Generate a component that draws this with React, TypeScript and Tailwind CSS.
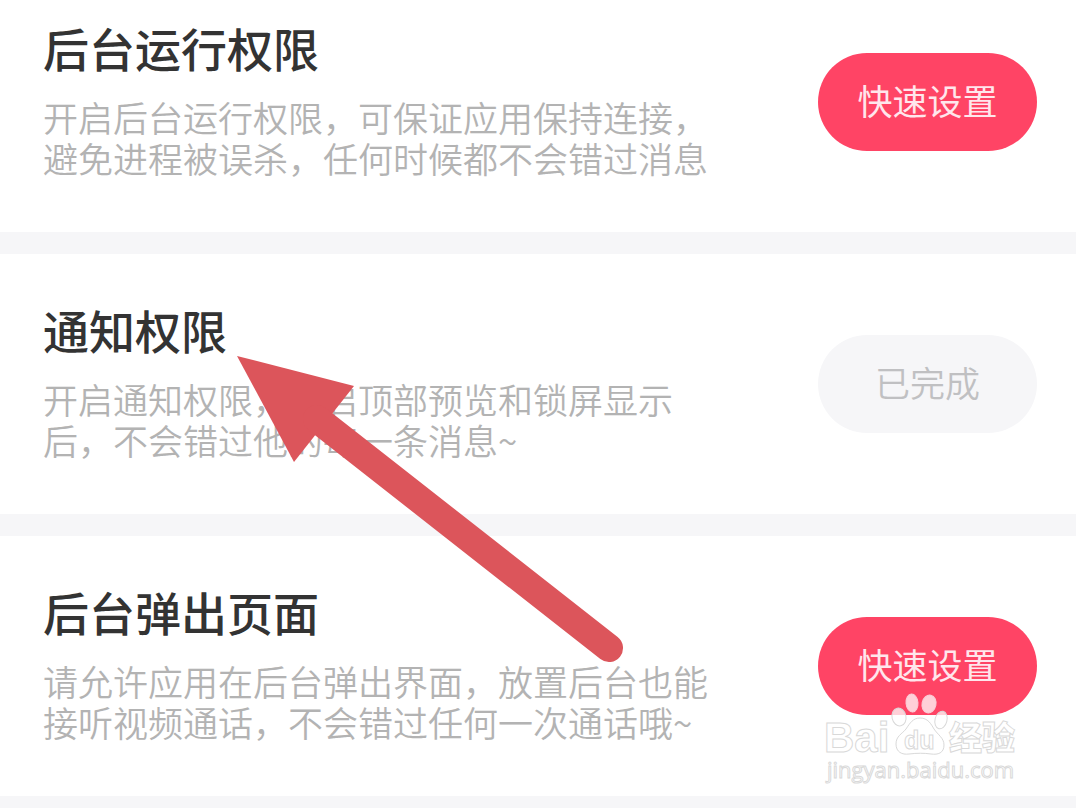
import clsx from 'clsx';

const PERMISSIONS = [
  {
    title: '后台运行权限',
    lines: ['开启后台运行权限，可保证应用保持连接，', '避免进程被误杀，任何时候都不会错过消息'],
    done: false,
  },
  {
    title: '通知权限',
    lines: ['开启通知权限，开启顶部预览和锁屏显示', '后，不会错过他的每一条消息~'],
    done: true,
  },
  {
    title: '后台弹出页面',
    lines: ['请允许应用在后台弹出界面，放置后台也能', '接听视频通话，不会错过任何一次通话哦~'],
    done: false,
  },
];

function Arrow() {
  return (
    <svg
      className="pointer-events-none absolute top-[356px] left-[237px]"
      width="390"
      height="308"
      viewBox="0 0 390 308"
      aria-hidden="true"
    >
      <path d="M0 0 L117 30 L57 106 Z" fill="#dc555b" />
      <path d="M80 63 L372 292" stroke="#dc555b" strokeWidth="28" strokeLinecap="round" />
    </svg>
  );
}

function Watermark() {
  return (
    <svg
      className="pointer-events-none absolute right-14 bottom-0"
      width="200"
      height="106"
      viewBox="0 0 200 106"
      fill="#fff"
      fillOpacity="0.75"
      stroke="#d9d9d9"
      strokeWidth="1"
      aria-hidden="true"
    >
      <ellipse cx="92" cy="13" rx="6" ry="9" stroke="#f9cdd6" transform="rotate(-5 92 13)" />
      <ellipse cx="109" cy="14" rx="7" ry="9" stroke="#f9cdd6" transform="rotate(12 109 14)" />
      <ellipse cx="79" cy="27" rx="7" ry="9" transform="rotate(-12 79 27)" />
      <ellipse cx="121" cy="30" rx="6" ry="9" transform="rotate(14 121 30)" />
      <path d="M100 28c8 0 11 6 14 11 4 6 10 9 10 16 0 8-6 10-13 9-7-1-14-1-22 0-7 1-13-2-13-10 0-8 6-10 10-15 4-6 7-11 14-11Z" />
      <g fontFamily='"Liberation Sans", Arial, sans-serif' fontWeight="700">
        <text x="4" y="62" fontSize="42">Bai</text>
        <text x="84" y="59" fontSize="25">du</text>
      </g>
      <text x="129" y="60" fontSize="33" fontWeight="900" fontFamily='"Noto Sans CJK SC", sans-serif'>
        经验
      </text>
      <text x="7" y="88" fontSize="22" fontFamily='"Open Sans", sans-serif'>
        jingyan.baidu.com
      </text>
    </svg>
  );
}

export default function App() {
  return (
    <main className="relative bg-white font-['Noto_Sans_CJK_SC',sans-serif]">
      {PERMISSIONS.map((item, index) => {
        const last = index === PERMISSIONS.length - 1;

        return (
          <section
            key={item.title}
            className={clsx(
              'relative flex items-start justify-between border-[#f6f6f8] pr-[39px] pb-[54px] pl-[43px]',
              index === 0 ? 'pt-[17px]' : 'pt-[45px]',
              last ? 'border-b-12' : 'border-b-22',
            )}
          >
            <div>
              <h2 className="text-[46px] leading-[60px] font-medium text-[#333333]">{item.title}</h2>
              <p className="mt-[19px] text-[35px] leading-[41px] font-[350] text-[#b3b3b3]">
                {item.lines.map((line) => (
                  <span key={line} className="block whitespace-nowrap">
                    {line}
                  </span>
                ))}
              </p>
            </div>
            <button
              type="button"
              disabled={item.done}
              className={clsx(
                'mt-[36px] h-[98px] w-[219px] shrink-0 rounded-full pb-1 text-[35px]',
                item.done ? 'bg-[#f6f6f8] font-[350] text-[#c0c0c2]' : 'bg-[#ff4465] text-[#ffe6ec]',
              )}
            >
              {item.done ? '已完成' : '快速设置'}
            </button>
            {last && <Watermark />}
          </section>
        );
      })}
      <Arrow />
    </main>
  );
}
